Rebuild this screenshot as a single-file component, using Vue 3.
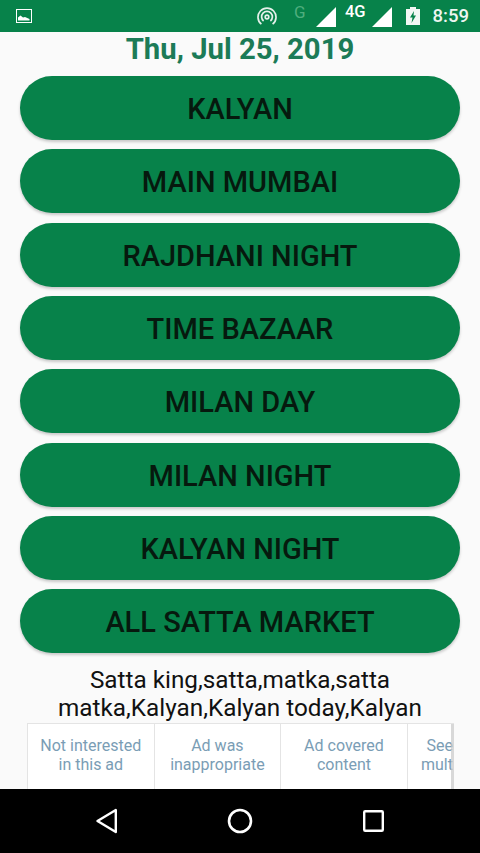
<script setup>
const markets = ['KALYAN','MAIN MUMBAI','RAJDHANI NIGHT','TIME BAZAAR','MILAN DAY','MILAN NIGHT','KALYAN NIGHT','ALL SATTA MARKET']
const ads = [['Not interested','in this ad'],['Ad was','inappropriate'],['Ad covered','content']]
</script>

<template>
  <div class="screen">
    <header class="status">
      <svg class="pic" viewBox="0 0 16 14" width="16" height="14">
        <rect x="0.5" y="0.5" width="15" height="13" fill="none" stroke="#fff" />
        <path d="M2 11.5V8.5L4.5 6.5L7 8.5L9 8L13.5 10V11.5Z" fill="#fff" />
      </svg>
      <div class="status-right">
        <svg class="cast" viewBox="0 0 20 20" width="20" height="20" fill="none" stroke="#e4f0ea" stroke-width="1.7">
          <circle cx="10" cy="10" r="1.8" />
          <path d="M6.6 14A5.4 5.4 0 1 1 13.4 14" />
          <path d="M4.4 17.2A9 9 0 1 1 15.6 17.2" />
        </svg>
        <span class="g">G</span>
        <svg class="sig1" viewBox="0 0 20 20" width="20" height="20"><path d="M0 20L20 0V20Z" fill="#fff" /></svg>
        <span class="fourg">4G</span>
        <svg class="sig2" viewBox="0 0 20 20" width="20" height="20"><path d="M0 20L20 0V20Z" fill="#fff" /></svg>
        <svg class="batt" viewBox="0 0 14 18" width="14" height="18">
          <path d="M4 0H10V2H14V18H0V2H4Z" fill="#f2f7f4" />
          <path d="M8 4L4 10.5H6.5L5.5 16L10 8.5H7.5Z" fill="#07824a" />
        </svg>
        <span class="time">8:59</span>
      </div>
    </header>

    <main class="content">
      <h1 class="date">Thu, Jul 25, 2019</h1>
      <div class="list">
        <button v-for="m in markets" :key="m" class="pill">{{ m }}</button>
      </div>
      <p class="blurb">Satta king,satta,matka,satta matka,Kalyan,Kalyan today,Kalyan</p>
      <div class="ads">
        <div v-for="(a, i) in ads" :key="i" class="ad">
          <span>{{ a[0] }}</span>
          <span>{{ a[1] }}</span>
        </div>
        <div class="ad ad-last">
          <span>See</span>
          <span>mult</span>
        </div>
      </div>
    </main>

    <footer class="nav">
      <svg viewBox="0 0 24 26" width="24" height="26" fill="none" stroke="#fff" stroke-width="2.4" stroke-linejoin="round">
        <path d="M19.8 2V24L1.5 13Z" />
      </svg>
      <svg viewBox="0 0 26 26" width="26" height="26" fill="none" stroke="#fff" stroke-width="2.6">
        <circle cx="13" cy="13" r="11" />
      </svg>
      <svg viewBox="0 0 24 24" width="24" height="24" fill="none" stroke="#fff" stroke-width="2.4" stroke-linejoin="round">
        <rect x="4.2" y="2.2" width="18.6" height="19.6" rx="1" />
      </svg>
    </footer>
  </div>
</template>

<style>
html, body { margin: 0; background: #fafafa; }
</style>

<style scoped>
.screen {
  width: 480px;
  height: 853px;
  display: flex;
  flex-direction: column;
  overflow: hidden;
  background: #fafafa;
  font-family: Roboto, "Liberation Sans", sans-serif;
}
.status {
  height: 32px;
  flex: none;
  background: #07824a;
  display: flex;
  align-items: center;
  justify-content: space-between;
  padding: 0 11px 0 16px;
  color: #fff;
}
.pic { margin-top: -1px; }
.status-right { display: flex; align-items: center; }
.cast { margin-right: 17px; margin-top: 1px; }
.g { font-size: 17px; color: #4fae7e; width: 12px; margin-top: -8px; margin-right: 10px; }
.sig1 { margin-right: 9px; margin-top: 1px; }
.fourg { font-size: 16.5px; font-weight: 500; margin-top: -9px; margin-right: 6px; }
.sig2 { margin-right: 14px; margin-top: 1px; }
.batt { margin-right: 13px; }
.time { font-size: 18.5px; font-weight: 500; color: #eef5f1; }

.content { flex: 1; min-height: 0; display: flex; flex-direction: column; overflow: hidden; }
.date {
  margin: 0;
  height: 34px;
  line-height: 34px;
  text-align: center;
  font-size: 29.3px;
  font-weight: 700;
  color: #1c7b57;
}
.list {
  margin-top: 10px;
  padding: 0 20px;
  display: flex;
  flex-direction: column;
  gap: 9.35px;
}
.pill {
  height: 64px;
  border: none;
  border-radius: 32px;
  background: #07824a;
  color: #06190e;
  font-family: inherit;
  font-size: 29px;
  font-weight: 500;
  padding: 2px 0 0;
  box-shadow: 0 2px 3px rgba(0, 0, 0, 0.2);
}
.blurb {
  margin: 12.5px auto 0;
  width: 400px;
  text-align: center;
  font-size: 24.3px;
  line-height: 28px;
  color: #111;
}
.ads {
  margin: 1px 0 0 27px;
  width: 427px;
  height: 66px;
  flex: none;
  display: flex;
  overflow: hidden;
  background: #fff;
  border-top: 1px solid #e4e4e4;
  border-left: 1px solid #e4e4e4;
  box-sizing: border-box;
  position: relative;
}
.ads::after {
  content: "";
  position: absolute;
  right: 0;
  top: 0;
  bottom: 0;
  width: 3px;
  background: rgba(200, 200, 200, 0.7);
}
.ad {
  flex: none;
  width: 126.6px;
  box-sizing: border-box;
  border-right: 1px solid #e4e4e4;
  padding-top: 12.5px;
  display: flex;
  flex-direction: column;
  align-items: center;
  font-size: 16px;
  line-height: 19px;
  color: #7a9db5;
  white-space: nowrap;
}
.ad-last {
  flex: 1;
  width: auto;
  min-width: 0;
  border-right: none;
  align-items: flex-end;
  padding-right: 1px;
}
.nav {
  height: 64px;
  flex: none;
  background: #000;
  display: flex;
  align-items: center;
  justify-content: space-between;
  padding: 0 96px;
}
</style>
